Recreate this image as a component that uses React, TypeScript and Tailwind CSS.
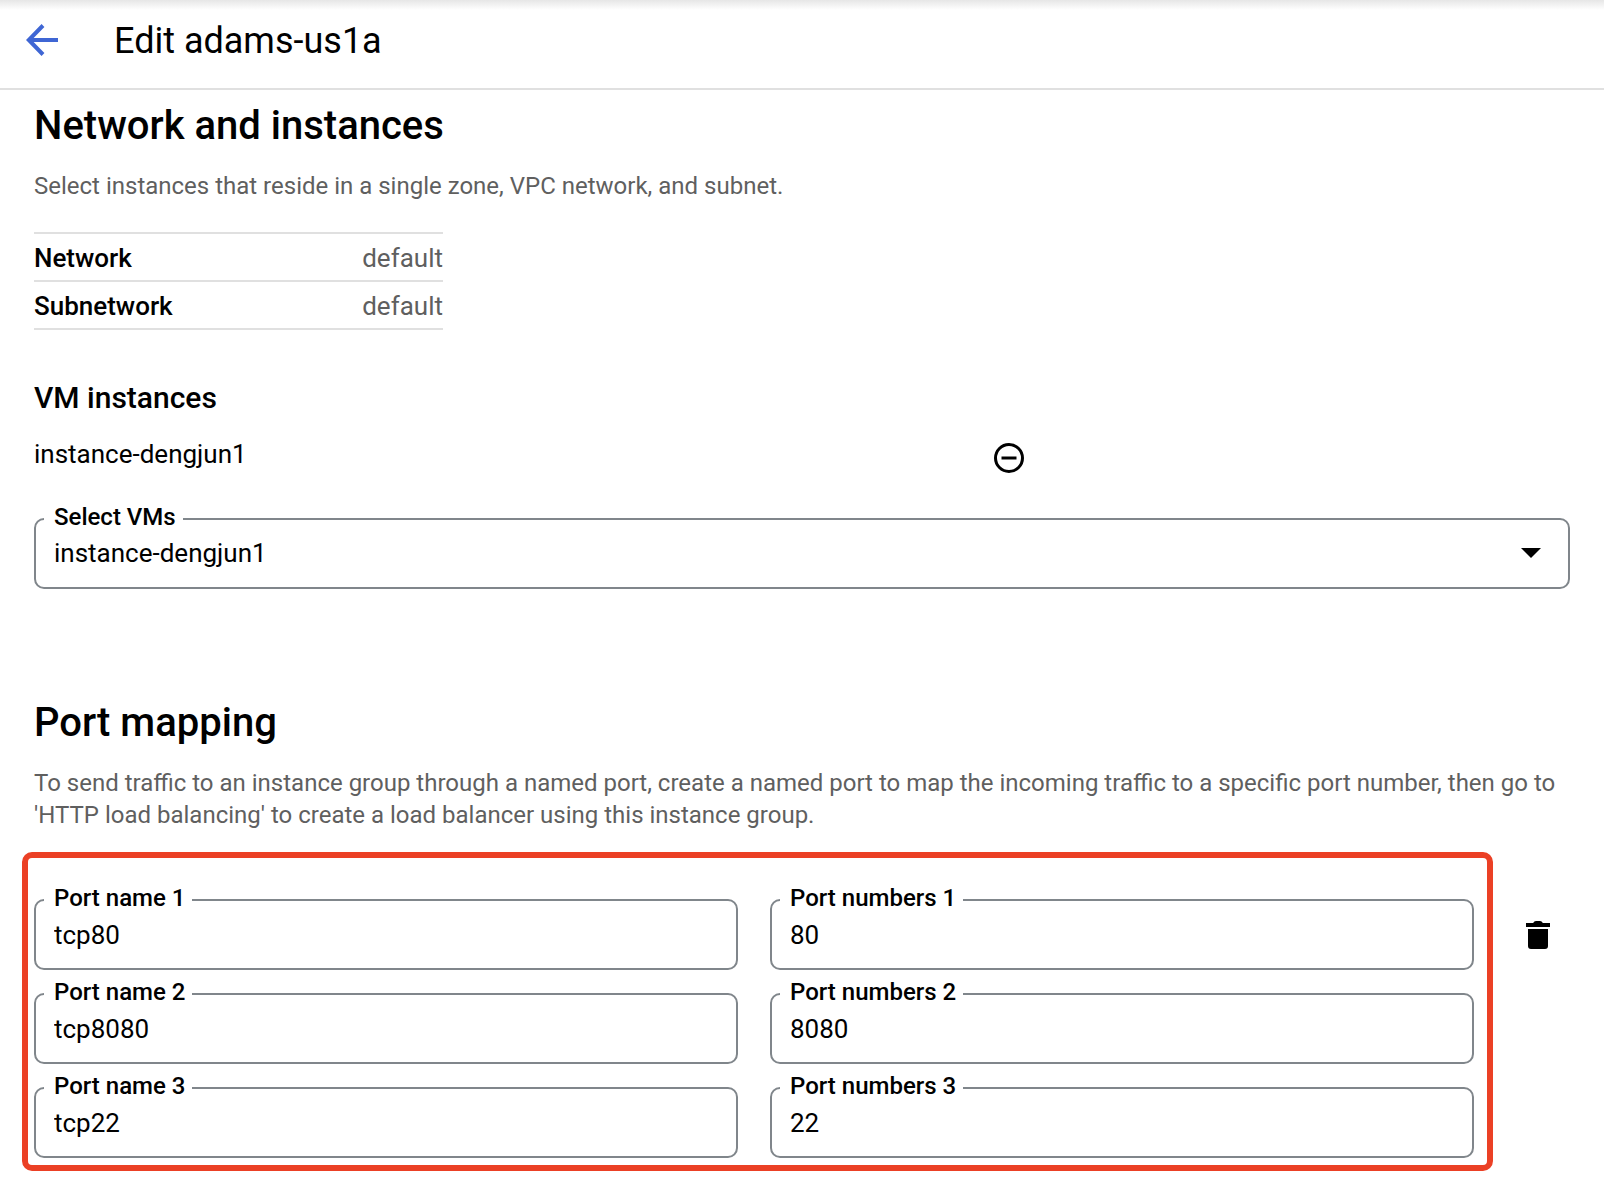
import { useId } from "react";

const notchLabel =
  "absolute left-[10px] -top-[17px] bg-white pl-[10px] pr-[7px] text-[24px] leading-[32px] font-medium whitespace-nowrap";
const outlined =
  "block h-[71px] w-full rounded-[10px] border-2 border-[#80868b] bg-white px-[18px] text-[26px] leading-[32px] text-black outline-none";

function TextField({ label, value }: { label: string; value: string }) {
  const id = useId();
  return (
    <div className="relative min-w-0">
      <label htmlFor={id} className={notchLabel}>
        {label}
      </label>
      <input id={id} type="text" defaultValue={value} className={outlined} />
    </div>
  );
}

function SelectField({ label, options }: { label: string; options: string[] }) {
  const id = useId();
  return (
    <div className="relative">
      <label htmlFor={id} className={notchLabel}>
        {label}
      </label>
      <select id={id} className={`${outlined} appearance-none pb-[2px]`}>
        {options.map((o) => (
          <option key={o}>{o}</option>
        ))}
      </select>
      <svg
        viewBox="0 0 20 10"
        className="pointer-events-none absolute right-[29px] top-[30px] h-[10px] w-5"
        aria-hidden="true"
      >
        <path d="M0 0h20L10 10z" />
      </svg>
    </div>
  );
}

const network = [
  ["Network", "default"],
  ["Subnetwork", "default"],
];

const ports = [
  ["tcp80", "80"],
  ["tcp8080", "8080"],
  ["tcp22", "22"],
];

export default function App() {
  return (
    <div className="min-h-screen bg-white font-['Roboto',sans-serif] text-black">
      <header className="flex h-[90px] items-center border-b-2 border-[#e0e0e0] bg-linear-to-b from-[#e6e6e6] to-white to-[10px] pb-2 pl-[26px]">
        <button type="button" aria-label="Back" className="mr-14 size-8">
          <svg viewBox="0 0 32 32" className="size-8" aria-hidden="true">
            <path d="M32 16H3M17 1.5L2.8 16L17 30.5" fill="none" stroke="#3f66d4" strokeWidth="4" />
          </svg>
        </button>
        <h1 className="pt-[2px] text-[36px] leading-[44px]">Edit adams-us1a</h1>
      </header>

      <main className="px-[34px] pb-[10px] pt-3">
        <section>
          <h2 className="text-[40px] leading-[48px] font-medium">Network and instances</h2>
          <p className="mt-5 text-[24px] leading-[32px] text-[#5f5f5f]">
            Select instances that reside in a single zone, VPC network, and subnet.
          </p>
          <table className="mt-[30px] w-[409px] border-collapse text-[26px] leading-[32px]">
            <tbody>
              {network.map(([name, value]) => (
                <tr key={name} className="h-12 border-y-2 border-[#e0e0e0]">
                  <th scope="row" className="p-0 pt-[2px] text-left font-medium">
                    {name}
                  </th>
                  <td className="p-0 pt-[2px] text-right text-[#5f5f5f]">{value}</td>
                </tr>
              ))}
            </tbody>
          </table>

          <h3 className="mt-12 text-[30px] leading-[40px] font-medium">VM instances</h3>
          <div className="mt-5 grid grid-cols-[5fr_3fr] items-center">
            <span className="pb-2 text-[26px] leading-[32px]">instance-dengjun1</span>
            <button type="button" aria-label="Remove instance-dengjun1" className="size-[30px]">
              <svg viewBox="0 0 30 30" className="size-[30px]" aria-hidden="true">
                <circle cx="15" cy="15" r="13.5" fill="none" stroke="#000" strokeWidth="3" />
                <path d="M7.5 15h15" stroke="#000" strokeWidth="3" />
              </svg>
            </button>
          </div>
          <div className="mt-10">
            <SelectField label="Select VMs" options={["instance-dengjun1"]} />
          </div>
        </section>

        <section className="mt-[110px]">
          <h2 className="text-[40px] leading-[48px] font-medium">Port mapping</h2>
          <p className="mt-5 text-[24px] leading-[32px] text-[#5f5f5f]">
            To send traffic to an instance group through a named port, create a named port to map the incoming
            traffic to a specific port number, then go to 'HTTP load balancing' to create a load balancer using
            this instance group.
          </p>
          <div className="-ml-3 mt-[21px] flex items-start">
            <div className="grid flex-1 grid-cols-2 gap-x-8 gap-y-[23px] rounded-[10px] border-[6px] border-[#eb4025] pb-[7px] pl-[6px] pr-[13px] pt-[41px]">
              {ports.flatMap(([name, number], i) => [
                <TextField key={name} label={`Port name ${i + 1}`} value={name} />,
                <TextField key={number} label={`Port numbers ${i + 1}`} value={number} />,
              ])}
            </div>
            <button type="button" aria-label="Delete port mapping" className="ml-[33px] mr-5 mt-[69px] h-7 w-6">
              <svg viewBox="0 0 24 28" className="h-7 w-6" aria-hidden="true">
                <path d="M0 2h7.2C7.8.8 8.8 0 10 0h4c1.200 0 2.200.8 2.800 2H24v4H0zM2 8h20v17a3 3 0 0 1-3 3H5a3 3 0 0 1-3-3z" />
              </svg>
            </button>
          </div>
        </section>
      </main>
    </div>
  );
}
